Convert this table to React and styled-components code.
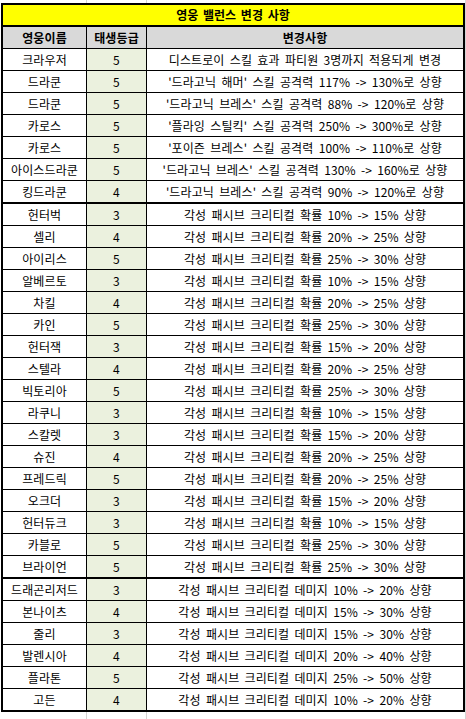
import styled, { createGlobalStyle } from "styled-components";

const GlobalStyle = createGlobalStyle`
  html, body {
    margin: 0;
    padding: 0;
    background-color: #ffffff;
    background-image:
      linear-gradient(to right, transparent 86px, #d4d4d4 86px, #d4d4d4 87px, transparent 87px),
      linear-gradient(to right, transparent 146px, #d4d4d4 146px, #d4d4d4 147px, transparent 147px),
      linear-gradient(to right, transparent 465px, #d4d4d4 465px, #d4d4d4 466px, transparent 466px);
    min-height: 719px;
  }
  * {
    box-sizing: border-box;
  }
`;

const Sheet = styled.div`
  margin: 3px 0 0 1px;
  width: 464px;
  border: 2px solid #000;
  background: #fff;
  font-family: "Noto Sans CJK KR", "Noto Sans", sans-serif;
  color: #000;
`;

const TitleRow = styled.div`
  height: 22px;
  background: #ffff00;
  border-bottom: 2px solid #000;
  display: flex;
  align-items: center;
  justify-content: center;
  font-size: 12px;
  font-weight: 700;
  line-height: 1;
  word-spacing: 2px;
`;

const Row = styled.div`
  display: grid;
  grid-template-columns: 84px 60px 1fr;
  height: ${(p) => (p.$last ? 21 : p.$thick ? 23 : 22)}px;
  border-bottom: ${(p) => (p.$last ? "none" : p.$thick ? "2px solid #000" : "1px solid #000")};
`;

const Cell = styled.div`
  display: flex;
  align-items: center;
  justify-content: center;
  white-space: nowrap;
  font-size: 12px;
  line-height: 1;
  word-spacing: 2.5px;
  letter-spacing: 0.1px;
  font-weight: ${(p) => (p.$head ? 700 : 400)};
  background: ${(p) => (p.$head ? "#d9d9d9" : p.$grade ? "#ebf1de" : "#ffffff")};
  border-right: ${(p) => (p.$end ? "none" : "1px solid #000")};
`;

const skill = [
  ["크라우저", 5, "디스트로이 스킬 효과 파티원 3명까지 적용되게 변경"],
  ["드라쿤", 5, "'드라고닉 해머' 스킬 공격력 117% -> 130%로 상향"],
  ["드라쿤", 5, "'드라고닉 브레스' 스킬 공격력 88% -> 120%로 상향"],
  ["카로스", 5, "'플라잉 스틸킥' 스킬 공격력 250% -> 300%로 상향"],
  ["카로스", 5, "'포이즌 브레스' 스킬 공격력 100% -> 110%로 상향"],
  ["아이스드라쿤", 5, "'드라고닉 브레스' 스킬 공격력 130% -> 160%로 상향"],
  ["킹드라쿤", 4, "'드라고닉 브레스' 스킬 공격력 90% -> 120%로 상향"],
];

const crit = [
  ["헌터벅", 3, 10, 15],
  ["셀리", 4, 20, 25],
  ["아이리스", 5, 25, 30],
  ["알베르토", 3, 10, 15],
  ["차킬", 4, 20, 25],
  ["카인", 5, 25, 30],
  ["헌터잭", 3, 15, 20],
  ["스텔라", 4, 20, 25],
  ["빅토리아", 5, 25, 30],
  ["라쿠니", 3, 10, 15],
  ["스칼렛", 3, 15, 20],
  ["슈진", 4, 20, 25],
  ["프레드릭", 5, 20, 25],
  ["오크더", 3, 15, 20],
  ["헌터듀크", 3, 10, 15],
  ["카블로", 5, 25, 30],
  ["브라이언", 5, 25, 30],
].map(([n, g, a, b]) => [n, g, `각성 패시브 크리티컬 확률 ${a}% -> ${b}% 상향`]);

const damage = [
  ["드래곤리저드", 3, 10, 20],
  ["본나이츠", 4, 15, 30],
  ["줄리", 3, 15, 30],
  ["발렌시아", 4, 20, 40],
  ["플라톤", 5, 25, 50],
  ["고든", 4, 10, 20],
].map(([n, g, a, b]) => [n, g, `각성 패시브 크리티컬 데미지 ${a}% -> ${b}% 상향`]);

const groups = [skill, crit, damage];

const App = () => {
  return (
    <>
      <GlobalStyle />
      <Sheet>
        <TitleRow>영웅 밸런스 변경 사항</TitleRow>
        <Row>
          <Cell $head>영웅이름</Cell>
          <Cell $head>태생등급</Cell>
          <Cell $head $end>변경사항</Cell>
        </Row>
        {groups.map((rows, gi) =>
          rows.map(([name, grade, text], i) => {
            const lastInGroup = i === rows.length - 1;
            const last = lastInGroup && gi === groups.length - 1;
            return (
              <Row key={`${gi}-${i}`} $thick={lastInGroup} $last={last}>
                <Cell>{name}</Cell>
                <Cell $grade>{grade}</Cell>
                <Cell $end>{text}</Cell>
              </Row>
            );
          })
        )}
      </Sheet>
    </>
  );
};

export default App;
